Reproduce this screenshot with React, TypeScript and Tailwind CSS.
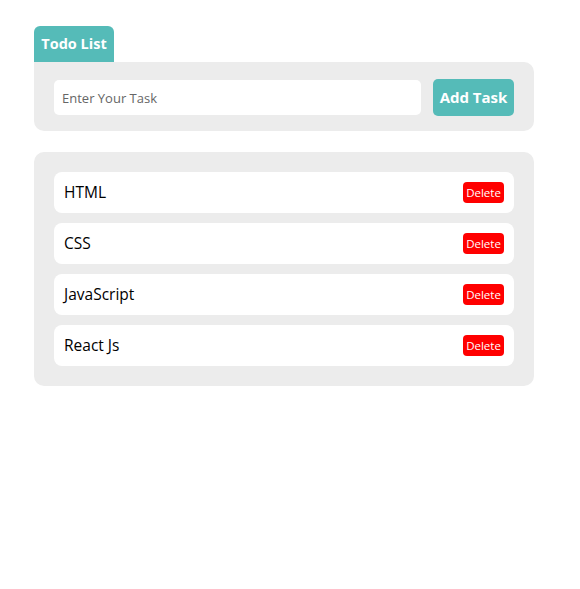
import React, { useState } from 'react';

const App: React.FC = () => {
  const [task, setTask] = useState('');
  const [todos, setTodos] = useState<string[]>(['HTML', 'CSS', 'JavaScript', 'React Js']);

  const addTask = () => {
    if (!task.trim()) return;
    setTodos([...todos, task.trim()]);
    setTask('');
  };

  return (
    <div className="min-h-[589px] bg-white pt-[26px] pl-[34px]" style={{ fontFamily: '"Open Sans", "Noto Sans", sans-serif' }}>
      <div className="w-[500px]">
        <div className="inline-flex h-[36px] w-[80px] items-center justify-center rounded-t-[6px] bg-[#55bbb8] text-[14.5px] font-bold text-white">
          Todo List
        </div>
        <div className="flex items-center gap-3 rounded-b-[10px] rounded-tr-[10px] bg-[#ececec] px-5 pt-[17px] pb-[15px]">
          <input
            value={task}
            onChange={(e) => setTask(e.target.value)}
            placeholder="Enter Your Task"
            className="h-[35px] flex-1 rounded-[5px] bg-white px-2 text-[13px] text-black outline-none placeholder:text-[#666]"
          />
          <button
            onClick={addTask}
            className="h-[37px] w-[81px] rounded-[5px] bg-[#55bbb8] text-[15px] font-bold text-white"
          >
            Add Task
          </button>
        </div>

        <div className="mt-[21px] flex flex-col gap-[10px] rounded-[10px] bg-[#ececec] px-5 pt-5 pb-5">
          {todos.map((t, i) => (
            <div key={i} className="flex h-[41px] items-center justify-between rounded-[8px] bg-white pl-[10px] pr-[10px]">
              <span className="pt-px text-[15.5px] text-black">{t}</span>
              <button
                onClick={() => setTodos(todos.filter((_, j) => j !== i))}
                className="h-[21px] w-[41px] rounded-[4px] bg-[#ff0000] text-[11.5px] text-white"
              >
                Delete
              </button>
            </div>
          ))}
        </div>
      </div>
    </div>
  );
};

export default App;
